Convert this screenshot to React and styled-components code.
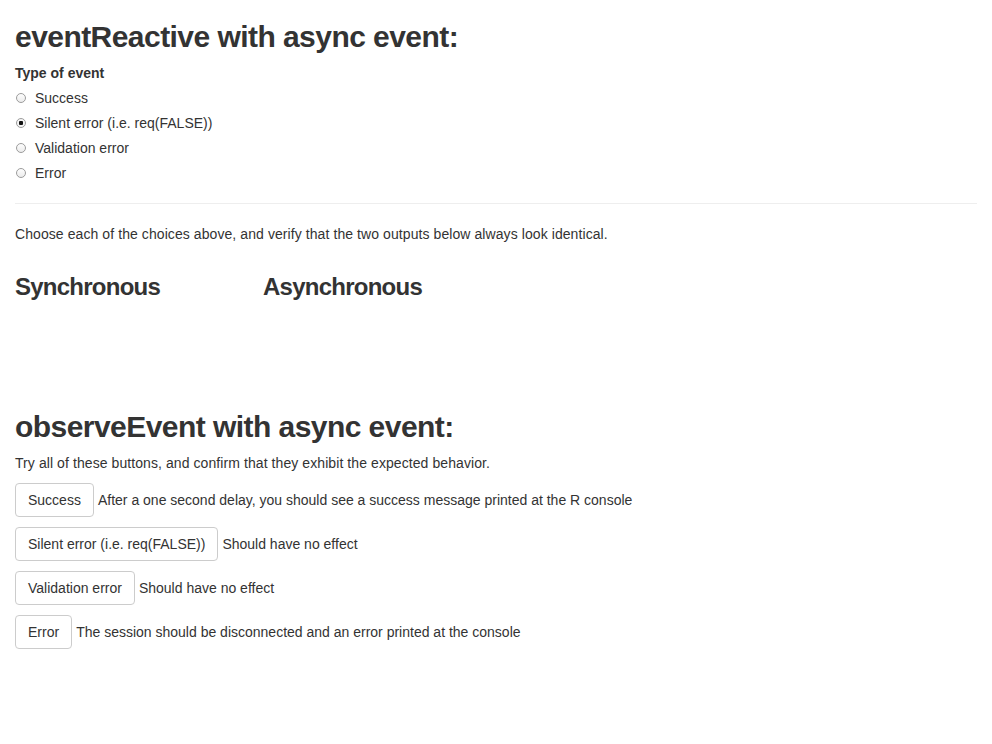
import React from "react";
import styled, { createGlobalStyle } from "styled-components";

const GlobalStyle = createGlobalStyle`
  html, body {
    margin: 0;
    background: #fff;
  }
  body {
    font-family: "Liberation Sans", Helvetica, Arial, sans-serif;
    font-size: 14px;
    line-height: 20px;
    color: #333;
  }
  * {
    box-sizing: border-box;
  }
`;

const Page = styled.div`
  padding: 0 15px;
`;

const Title = styled.h2`
  margin: 20px 0 10px;
  font-size: 30px;
  line-height: 33px;
  font-weight: bold;
  letter-spacing: -0.55px;
`;

const SubTitle = styled.h3`
  margin: 20px 0 10px;
  font-size: 24px;
  line-height: 26px;
  font-weight: bold;
  letter-spacing: -0.75px;
`;

const FormGroup = styled.div`
  margin-bottom: 15px;
`;

const GroupLabel = styled.label`
  display: inline-block;
  margin-bottom: 5px;
  font-weight: bold;
`;

const Options = styled.div`
  display: flex;
  flex-direction: column;
  gap: 5px;
`;

const RadioLabel = styled.label`
  display: flex;
  align-items: center;
  gap: 9px;
  height: 20px;
`;

const RadioDot = styled.input.attrs({ type: "radio" })`
  appearance: none;
  margin: 0 0 0 1px;
  width: 10px;
  height: 10px;
  border-radius: 50%;
  border: 1px solid #9c9c9c;
  background: ${(p) =>
    p.checked
      ? "radial-gradient(circle, #111 0 2px, #f4f4f4 2.5px)"
      : "linear-gradient(#fdfdfd, #ececec)"};
`;

const Divider = styled.hr`
  margin: 20px 0;
  border: 0;
  border-top: 1px solid #eee;
`;

const Text = styled.p`
  margin: 0 0 10px;
  letter-spacing: 0.08px;
`;

const Row = styled.div`
  display: grid;
  grid-template-columns: repeat(4, 1fr);
  margin: 0 -15px;
`;

const Column = styled.div`
  padding: 0 15px;
`;

const Output = styled.div`
  min-height: 80px;
`;

const ActionRow = styled.div`
  margin-bottom: 10px;
`;

const Button = styled.button`
  display: inline-block;
  padding: 6px 12px;
  font-family: inherit;
  font-size: 14px;
  line-height: 20px;
  color: #333;
  background: #fff;
  border: 1px solid #ccc;
  border-radius: 4px;
  margin-right: 4px;
`;

const eventTypes = [
  "Success",
  "Silent error (i.e. req(FALSE))",
  "Validation error",
  "Error",
];

const actions = [
  ["Success", "After a one second delay, you should see a success message printed at the R console"],
  ["Silent error (i.e. req(FALSE))", "Should have no effect"],
  ["Validation error", "Should have no effect"],
  ["Error", "The session should be disconnected and an error printed at the console"],
];

export default function App() {
  return (
    <Page>
      <GlobalStyle />
      <Title>eventReactive with async event:</Title>
      <FormGroup>
        <GroupLabel>Type of event</GroupLabel>
        <Options>
          {eventTypes.map((t, i) => (
            <RadioLabel key={t}>
              <RadioDot name="type" checked={i === 1} readOnly />
              {t}
            </RadioLabel>
          ))}
        </Options>
      </FormGroup>
      <Divider />
      <Text>
        Choose each of the choices above, and verify that the two outputs below always look identical.
      </Text>
      <Row>
        <Column>
          <SubTitle>Synchronous</SubTitle>
          <Output />
        </Column>
        <Column>
          <SubTitle>Asynchronous</SubTitle>
          <Output />
        </Column>
      </Row>
      <Title>observeEvent with async event:</Title>
      <Text>Try all of these buttons, and confirm that they exhibit the expected behavior.</Text>
      {actions.map(([label, note]) => (
        <ActionRow key={label}>
          <Button>{label}</Button>
          {note}
        </ActionRow>
      ))}
    </Page>
  );
}
